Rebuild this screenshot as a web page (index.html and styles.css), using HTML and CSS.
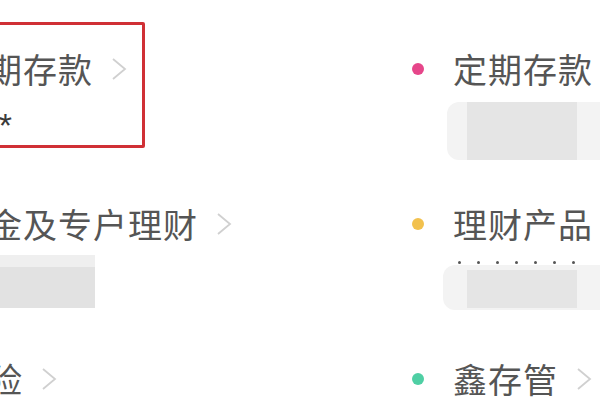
FILE: index.html
```html
<!DOCTYPE html>
<html lang="zh-CN">
<head>
<meta charset="utf-8">
<title>理财</title>
<link rel="stylesheet" href="styles.css">
</head>
<body>
<div class="board">
  <div class="item item-marked">
    <div class="head">
      <span class="dot dot-pink"></span>
      <span class="title">定期存款</span>
      <svg class="chev" viewBox="0 0 16 24" width="16" height="24"><polyline points="2,2 14,12 2,22" /></svg>
    </div>
    <div class="sub stars">****</div>
    <div class="mark"></div>
  </div>
  <div class="item">
    <div class="head">
      <span class="dot dot-pink"></span>
      <span class="title">定期存款</span>
    </div>
    <div class="sub">
      <div class="blob"><div class="blob-core"></div></div>
    </div>
  </div>
  <div class="item">
    <div class="head">
      <span class="dot dot-yellow"></span>
      <span class="title">基金及专户理财</span>
      <svg class="chev" viewBox="0 0 16 24" width="16" height="24"><polyline points="2,2 14,12 2,22" /></svg>
    </div>
    <div class="sub">
      <div class="block"></div>
    </div>
  </div>
  <div class="item">
    <div class="head">
      <span class="dot dot-yellow"></span>
      <span class="title">理财产品</span>
    </div>
    <div class="sub sub-specks">
      <div class="specks"><i></i><i></i><i></i><i></i><i></i><i></i><i></i></div>
      <div class="blob blob-low"><div class="blob-core"></div></div>
    </div>
  </div>
  <div class="item">
    <div class="head">
      <span class="dot dot-green"></span>
      <span class="title">保险</span>
      <svg class="chev" viewBox="0 0 16 24" width="16" height="24"><polyline points="2,2 14,12 2,22" /></svg>
    </div>
  </div>
  <div class="item">
    <div class="head">
      <span class="dot dot-green"></span>
      <span class="title">鑫存管</span>
      <svg class="chev" viewBox="0 0 16 24" width="16" height="24"><polyline points="2,2 14,12 2,22" /></svg>
    </div>
  </div>
</div>
</body>
</html>
```
FILE: styles.css
```css
html, body {
  margin: 0;
  padding: 0;
  background: #ffffff;
}
body {
  width: 600px;
  height: 400px;
  overflow: hidden;
  font-family: "Noto Sans CJK SC", "Noto Sans", sans-serif;
}
.board {
  display: grid;
  grid-template-columns: 500px 500px;
  grid-auto-rows: 155px;
  margin-left: -100px;
  padding-top: 49px;
}
.item {
  position: relative;
  display: flex;
  flex-direction: column;
}
.head {
  display: flex;
  align-items: center;
  height: 40px;
  padding-left: 12px;
}
.dot {
  width: 12px;
  height: 12px;
  border-radius: 50%;
  margin-right: 29px;
  flex: none;
}
.dot-pink { background: #e6468a; }
.dot-yellow { background: #f2c14e; }
.dot-green { background: #4fcfa4; }
.title {
  font-size: 34px;
  line-height: 40px;
  letter-spacing: 1px;
  color: #555555;
  white-space: nowrap;
}
.chev {
  margin-left: 18px;
  flex: none;
}
.chev polyline {
  fill: none;
  stroke: #d0d0d0;
  stroke-width: 1.8;
  stroke-linejoin: miter;
}
.sub {
  padding-left: 53px;
}
.stars {
  margin-top: 19px;
  font-family: "Liberation Sans", Arial, sans-serif;
  font-size: 34px;
  line-height: 34px;
  letter-spacing: 2px;
  color: #3a3a3a;
}
.mark {
  position: absolute;
  left: 0;
  top: -27px;
  width: 245px;
  height: 126px;
  box-sizing: border-box;
  border: 3px solid #d03035;
  border-radius: 2px;
}
.block {
  margin-top: 11px;
  width: 142px;
  height: 53px;
  background: linear-gradient(#efefef 0, #efefef 12px, #e2e2e2 12px);
}
.item .sub .blob {
  margin-top: 13px;
  margin-left: -6px;
  width: 200px;
  height: 58px;
  border-radius: 12px 0 0 12px;
  background: #f3f3f3;
  display: flex;
}
.blob-core {
  margin-left: 20px;
  width: 110px;
  background: #e5e5e5;
}
.sub-specks .specks {
  margin-top: 17px;
  margin-left: 5px;
  width: 117px;
  height: 3px;
  display: flex;
  justify-content: space-between;
}
.specks i {
  width: 3px;
  height: 3px;
  border-radius: 50%;
  background: #555555;
}
.item .sub .blob-low {
  margin-top: 1px;
  margin-left: -10px;
  height: 45px;
  padding-top: 5px;
  box-sizing: border-box;
}
.blob-low .blob-core {
  margin-left: 24px;
  height: 38px;
}
```
